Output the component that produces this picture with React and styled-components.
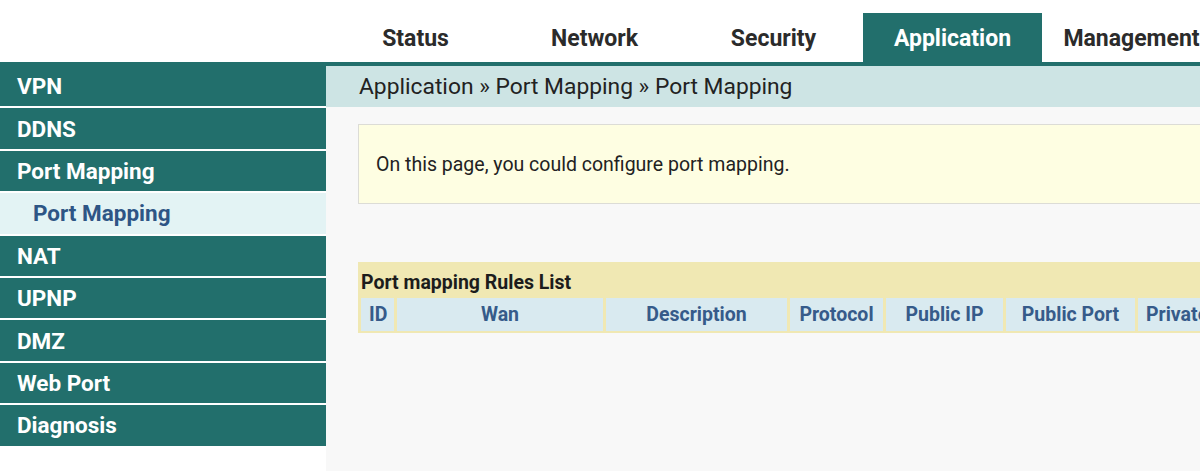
import React from "react";
import styled, { createGlobalStyle } from "styled-components";

const Global = createGlobalStyle`
  html, body { margin: 0; padding: 0; background: #ffffff; }
  body { font-family: Roboto, "Liberation Sans", Arial, sans-serif; }
  * { box-sizing: border-box; }
`;

const Page = styled.div`
  width: 1200px;
  height: 471px;
  overflow: hidden;
  display: flex;
  flex-direction: column;
`;

const Header = styled.div`
  height: 66px;
  flex: none;
  display: flex;
  align-items: flex-end;
  padding-left: 326px;
  border-bottom: 4px solid #226f6c;
  background: #fff;
`;

const Tab = styled.div`
  width: 179px;
  flex: none;
  height: 49px;
  display: flex;
  align-items: center;
  justify-content: center;
  font-size: 23px;
  font-weight: 700;
  white-space: nowrap;
  color: ${(p) => (p.$active ? "#ffffff" : "#2b2b2b")};
  background: ${(p) => (p.$active ? "#226f6c" : "transparent")};
  padding-top: 1px;
`;

const Body = styled.div`
  flex: 1;
  display: flex;
  min-height: 0;
`;

const Sidebar = styled.div`
  width: 326px;
  flex: none;
  display: flex;
  flex-direction: column;
  gap: 2px;
  background: #fff;
`;

const NavItem = styled.div`
  height: 40.4px;
  flex: none;
  display: flex;
  align-items: center;
  padding-left: ${(p) => (p.$sub ? "33px" : "17px")};
  font-size: 22.5px;
  font-weight: 700;
  color: ${(p) => (p.$sub ? "#2e5585" : "#ffffff")};
  background: ${(p) => (p.$sub ? "#e3f3f4" : "#226f6c")};
`;

const Main = styled.div`
  flex: 1;
  background: #f8f8f8;
  display: flex;
  flex-direction: column;
  min-width: 0;
`;

const Crumb = styled.div`
  height: 41px;
  flex: none;
  background: #cde4e4;
  display: flex;
  align-items: center;
  padding-left: 33px;
  font-size: 22.8px;
  color: #222;
`;

const Info = styled.div`
  margin: 17px 0 0 32px;
  height: 80px;
  flex: none;
  background: #fefee2;
  border: 1px solid #dcdcd6;
  border-right: none;
  display: flex;
  align-items: center;
  padding-left: 17px;
  font-size: 19.5px;
  color: #222;
`;

const Table = styled.table`
  margin: 58px 0 0 32px;
  border-collapse: separate;
  border-spacing: 3px 0;
  background: #f0e8b3;
  padding: 0 0 2px 0;
  width: ${(p) => p.$w}px;
  table-layout: fixed;
  flex: none;
`;

const Title = styled.th`
  height: 36px;
  text-align: left;
  font-size: 19.5px;
  font-weight: 700;
  color: #1c1c1c;
  padding: 4px 0 0 0;
`;

const HeadCell = styled.th`
  height: 33px;
  background: #d9eaf0;
  color: #365b8a;
  font-size: 19.5px;
  font-weight: 700;
  white-space: nowrap;
  overflow: hidden;
  padding: 0;
  text-align: ${(p) => (p.$left ? "left" : "center")};
  padding-left: ${(p) => (p.$left ? "8px" : "0")};
`;

const tabs = ["Status", "Network", "Security", "Application", "Management"];
const nav = [
  { t: "VPN" },
  { t: "DDNS" },
  { t: "Port Mapping" },
  { t: "Port Mapping", sub: true },
  { t: "NAT" },
  { t: "UPNP" },
  { t: "DMZ" },
  { t: "Web Port" },
  { t: "Diagnosis" },
];
const cols = [
  { t: "ID", w: 33, left: true },
  { t: "Wan", w: 206 },
  { t: "Description", w: 181 },
  { t: "Protocol", w: 93 },
  { t: "Public IP", w: 117 },
  { t: "Public Port", w: 129 },
  { t: "Private IP", w: 120, left: true },
  { t: "Private Port", w: 130 },
];
const tableWidth = cols.reduce((s, c) => s + c.w, 0) + 3 * (cols.length + 1);

export default function App() {
  return (
    <Page>
      <Global />
      <Header>
        {tabs.map((t) => (
          <Tab key={t} $active={t === "Application"}>
            {t}
          </Tab>
        ))}
      </Header>
      <Body>
        <Sidebar>
          {nav.map((n, i) => (
            <NavItem key={i} $sub={n.sub}>
              {n.t}
            </NavItem>
          ))}
        </Sidebar>
        <Main>
          <Crumb>Application » Port Mapping » Port Mapping</Crumb>
          <Info>On this page, you could configure port mapping.</Info>
          <Table $w={tableWidth}>
            <colgroup>
              {cols.map((c) => (
                <col key={c.t} style={{ width: c.w }} />
              ))}
            </colgroup>
            <thead>
              <tr>
                <Title colSpan={cols.length}>Port mapping Rules List</Title>
              </tr>
              <tr>
                {cols.map((c) => (
                  <HeadCell key={c.t} $left={c.left}>
                    {c.t}
                  </HeadCell>
                ))}
              </tr>
            </thead>
          </Table>
        </Main>
      </Body>
    </Page>
  );
}
